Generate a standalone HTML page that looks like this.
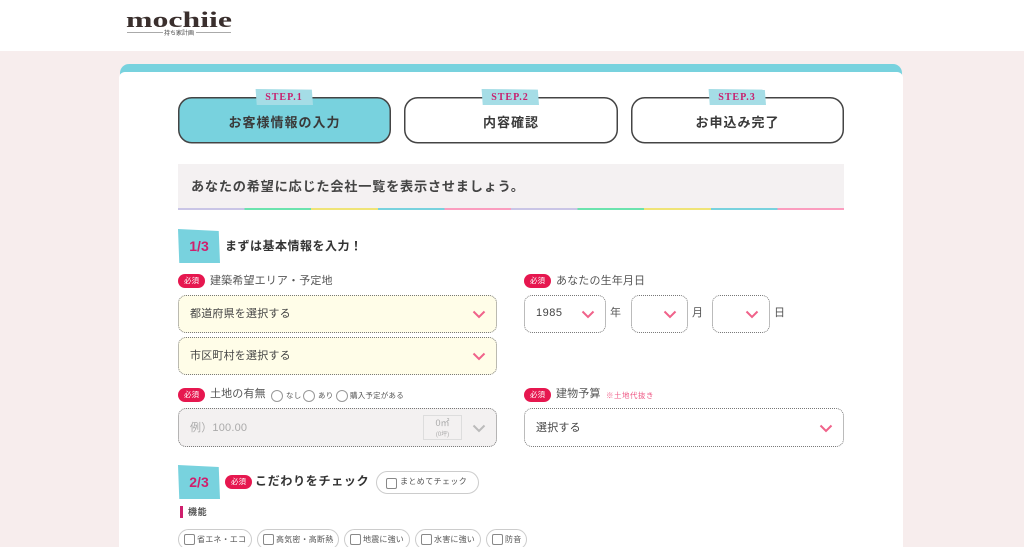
<!DOCTYPE html>
<html lang="ja"><head><meta charset="utf-8"><title>mochiie</title>
<style>
html,body{margin:0;padding:0;width:1024px;height:547px;overflow:hidden;background:#f7eded;}
body{position:relative;font-family:"Liberation Sans","Noto Sans CJK JP",sans-serif;color:#444;}
.a{position:absolute;white-space:nowrap;}
.step{position:absolute;top:97px;height:46px;text-align:center;line-height:51px;font-size:13px;font-weight:700;letter-spacing:1px;color:#3a3a3a;}
.tag{position:absolute;top:89px;height:16px;background:#a5dde6;color:#c81f6e;font:700 10px/17px "Liberation Serif",serif;text-align:center;letter-spacing:1px;clip-path:polygon(1% 0,98% 4%,100% 100%,3% 100%);}
.num{position:absolute;left:178px;width:42px;height:34px;background:#78d2de;color:#cf1f6d;font:700 14px/34px "Liberation Sans",sans-serif;text-align:center;clip-path:polygon(0 0,97% 6%,100% 100%,3% 100%);}
.req{position:absolute;width:27px;height:14px;border-radius:7px;background:#e6174f;color:#fff;font-size:7.5px;line-height:14px;text-align:center;}
.lb{position:absolute;font-size:11px;letter-spacing:.15px;line-height:14px;white-space:nowrap;color:#555;}
.sel{position:absolute;box-sizing:border-box;border:1px dotted #777;border-radius:8px;font-size:11px;letter-spacing:.2px;color:#444;}
.sel span{position:absolute;left:11px;top:calc(50% - 1px);transform:translateY(-50%);white-space:nowrap;}
.sel svg{position:absolute;}
.rad{position:absolute;top:390px;width:10px;height:10px;border:1px solid #999;border-radius:50%;background:#fff;}
.rt{position:absolute;top:391px;font-size:7.5px;letter-spacing:.2px;line-height:10px;color:#555;white-space:nowrap;}
.pill{position:absolute;top:529px;height:21px;box-sizing:border-box;border:1px solid #ccc;border-radius:11px;background:#fff;}
.pill i{position:absolute;left:5px;top:4px;width:9px;height:9px;border:1px solid #888;border-radius:2px;}
.pill b{position:absolute;left:18px;top:4px;font-weight:400;font-size:8px;line-height:12px;letter-spacing:.2px;color:#555;white-space:nowrap;}
</style></head><body>
<div class="a" style="left:0;top:0;width:1024px;height:51px;background:#fff;"></div>
<svg class="a" style="left:120px;top:5px;" width="120" height="35">
<text x="6" y="22" font-family="Liberation Serif,serif" font-weight="700" font-size="22" fill="#3a2f2d" textLength="106" lengthAdjust="spacingAndGlyphs">mochiie</text>
<rect x="7" y="27" width="36" height="1" fill="#aaa"/><rect x="76" y="27" width="35" height="1" fill="#aaa"/>
<text x="44" y="30" font-family="Noto Sans CJK JP,sans-serif" font-size="6" fill="#444" textLength="30">持ち家計画</text>
</svg>
<div class="a" style="left:120px;top:64px;width:782px;height:500px;background:#78d2de;border-radius:9px 9px 0 0;"></div>
<div class="a" style="left:119px;top:72px;width:784px;height:490px;background:#fff;border-radius:6px 6px 0 0;"></div>

<svg class="a" style="left:0;top:0;" width="1024" height="150">
<rect x="178.75" y="97.75" width="211.5" height="45" rx="13" fill="#78d2de" stroke="#444" stroke-width="1.5"/>
<rect x="404.75" y="97.75" width="212.5" height="45" rx="13" fill="#fff" stroke="#444" stroke-width="1.5"/>
<rect x="631.75" y="97.75" width="211.5" height="45" rx="13" fill="#fff" stroke="#444" stroke-width="1.5"/>
</svg>
<div class="step" style="left:178px;width:213px;">お客様情報の入力</div>
<div class="step" style="left:404px;width:214px;">内容確認</div>
<div class="step" style="left:631px;width:213px;">お申込み完了</div>
<div class="tag" style="left:255px;width:58px;">STEP.1</div>
<div class="tag" style="left:481px;width:58px;">STEP.2</div>
<div class="tag" style="left:708px;width:58px;">STEP.3</div>

<div class="a" style="left:178px;top:164px;width:666px;height:44px;background:#f4f1f2;"></div>
<div class="a" style="left:191px;top:178px;font-size:13.2px;line-height:18px;font-weight:700;letter-spacing:.75px;color:#444;">あなたの希望に応じた会社一覧を表示させましょう。</div>
<div class="a" style="left:178px;top:208px;width:666px;height:2px;background:linear-gradient(90deg,#c9c5e6 0 10%,#6be3ae 10% 20%,#efe477 20% 30%,#78d2de 30% 40%,#fb9dbf 40% 50%,#c9c5e6 50% 60%,#6be3ae 60% 70%,#efe477 70% 80%,#78d2de 80% 90%,#fb9dbf 90% 100%);"></div>

<div class="num" style="top:229px;">1/3</div>
<div class="a" style="left:225px;top:238px;font-size:12px;line-height:16px;font-weight:700;letter-spacing:.5px;color:#333;">まずは基本情報を入力！</div>

<div class="req" style="left:178px;top:274px;">必須</div>
<div class="lb" style="left:210px;top:274px;">建築希望エリア・予定地</div>
<div class="sel" style="left:178px;top:295px;width:319px;height:38px;background:#fffde8;"><span>都道府県を選択する</span>
<svg style="right:10px;top:14px" width="14" height="9"><path d="M1.5 1.5L7 7L12.5 1.5" fill="none" stroke="#f0628a" stroke-width="2"/></svg></div>
<div class="sel" style="left:178px;top:337px;width:319px;height:38px;background:#fffde8;"><span>市区町村を選択する</span>
<svg style="right:10px;top:14px" width="14" height="9"><path d="M1.5 1.5L7 7L12.5 1.5" fill="none" stroke="#f0628a" stroke-width="2"/></svg></div>

<div class="req" style="left:524px;top:274px;">必須</div>
<div class="lb" style="left:556px;top:274px;">あなたの生年月日</div>
<div class="sel" style="left:524px;top:295px;width:82px;height:38px;"><span style="letter-spacing:.5px;">1985</span>
<svg style="right:10px;top:14px" width="14" height="9"><path d="M1.5 1.5L7 7L12.5 1.5" fill="none" stroke="#f0628a" stroke-width="2"/></svg></div>
<div class="lb" style="left:610px;top:306px;">年</div>
<div class="sel" style="left:631px;top:295px;width:57px;height:38px;">
<svg style="right:10px;top:14px" width="14" height="9"><path d="M1.5 1.5L7 7L12.5 1.5" fill="none" stroke="#f0628a" stroke-width="2"/></svg></div>
<div class="lb" style="left:692px;top:306px;">月</div>
<div class="sel" style="left:712px;top:295px;width:58px;height:38px;">
<svg style="right:10px;top:14px" width="14" height="9"><path d="M1.5 1.5L7 7L12.5 1.5" fill="none" stroke="#f0628a" stroke-width="2"/></svg></div>
<div class="lb" style="left:774px;top:306px;">日</div>

<div class="req" style="left:178px;top:388px;">必須</div>
<div class="lb" style="left:210px;top:387px;">土地の有無</div>
<div class="rad" style="left:271px;"></div><div class="rt" style="left:286px;">なし</div>
<div class="rad" style="left:303px;"></div><div class="rt" style="left:318px;">あり</div>
<div class="rad" style="left:336px;"></div><div class="rt" style="left:350px;">購入予定がある</div>
<div class="sel" style="left:178px;top:408px;width:319px;height:39px;background:#f3f1f1;color:#aaa;"><span>例）100.00</span>
<div class="a" style="left:244px;top:6px;width:39px;height:25px;border:1px solid #ddd;text-align:center;font-size:9px;line-height:10px;color:#aaa;letter-spacing:0;padding-top:2px;box-sizing:border-box;">0㎡<br><span style="position:static;transform:none;font-size:6px;">(0坪)</span></div>
<svg style="right:10px;top:15px" width="14" height="9"><path d="M1.5 1.5L7 7L12.5 1.5" fill="none" stroke="#bbb" stroke-width="2"/></svg></div>

<div class="req" style="left:524px;top:388px;">必須</div>
<div class="lb" style="left:556px;top:387px;">建物予算</div>
<div class="a" style="left:606px;top:390px;font-size:7.5px;line-height:11px;letter-spacing:.5px;color:#ef5a86;">※土地代抜き</div>
<div class="sel" style="left:524px;top:408px;width:320px;height:39px;"><span>選択する</span>
<svg style="right:10px;top:15px" width="14" height="9"><path d="M1.5 1.5L7 7L12.5 1.5" fill="none" stroke="#f0628a" stroke-width="2"/></svg></div>

<div class="num" style="top:465px;">2/3</div>
<div class="req" style="left:225px;top:475px;">必須</div>
<div class="a" style="left:255px;top:473px;font-size:12px;line-height:17px;font-weight:700;letter-spacing:.7px;color:#333;">こだわりをチェック</div>
<div class="a" style="left:376px;top:471px;width:103px;height:23px;box-sizing:border-box;border:1px solid #ccc;border-radius:12px;background:#fff;"></div>
<div class="a" style="left:386px;top:478px;width:9px;height:9px;border:1px solid #888;border-radius:2px;"></div>
<div class="a" style="left:400px;top:476px;font-size:8px;line-height:11px;letter-spacing:.4px;color:#555;">まとめてチェック</div>

<div class="a" style="left:180px;top:506px;width:3px;height:12px;background:#cf1f6d;"></div>
<div class="a" style="left:188px;top:506px;font-size:9px;line-height:12px;font-weight:700;letter-spacing:.6px;color:#555;">機能</div>

<div class="pill" style="left:178px;width:74px;"><i></i><b>省エネ・エコ</b></div>
<div class="pill" style="left:257px;width:82px;"><i></i><b>高気密・高断熱</b></div>
<div class="pill" style="left:344px;width:66px;"><i></i><b>地震に強い</b></div>
<div class="pill" style="left:415px;width:66px;"><i></i><b>水害に強い</b></div>
<div class="pill" style="left:486px;width:41px;"><i></i><b>防音</b></div>
</body></html>
